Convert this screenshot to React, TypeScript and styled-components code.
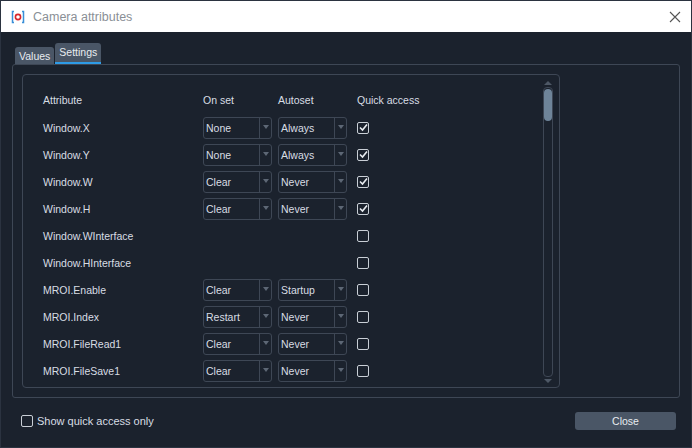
import React from 'react';
import styled, { createGlobalStyle } from 'styled-components';

const Global = createGlobalStyle`
  html, body { margin: 0; padding: 0; background: #1b222d; }
  body { font-family: "Liberation Sans", Arial, sans-serif; font-size: 10.5px; color: #d8dde4; }
  * { box-sizing: border-box; }
`;

type Row = { name: string; onSet?: string; autoset?: string; quick: boolean };

const rows: Row[] = [
  { name: 'Window.X', onSet: 'None', autoset: 'Always', quick: true },
  { name: 'Window.Y', onSet: 'None', autoset: 'Always', quick: true },
  { name: 'Window.W', onSet: 'Clear', autoset: 'Never', quick: true },
  { name: 'Window.H', onSet: 'Clear', autoset: 'Never', quick: true },
  { name: 'Window.WInterface', quick: false },
  { name: 'Window.HInterface', quick: false },
  { name: 'MROI.Enable', onSet: 'Clear', autoset: 'Startup', quick: false },
  { name: 'MROI.Index', onSet: 'Restart', autoset: 'Never', quick: false },
  { name: 'MROI.FileRead1', onSet: 'Clear', autoset: 'Never', quick: false },
  { name: 'MROI.FileSave1', onSet: 'Clear', autoset: 'Never', quick: false },
];

const Window = styled.div`
  width: 692px;
  height: 448px;
  display: flex;
  flex-direction: column;
  overflow: hidden;
  border: 1px solid #2b3340;
`;

const TitleBar = styled.div`
  height: 31px;
  background: #fff;
  display: flex;
  align-items: center;
  padding: 0 10px;
  gap: 8px;
  flex-shrink: 0;
`;

const Title = styled.span`
  flex: 1;
  color: #8a8f96;
  font-size: 12.5px;
`;

const Body = styled.div`
  flex: 1;
  padding: 11px 11px 0 11px;
  display: flex;
  flex-direction: column;
`;

const Tabs = styled.div`
  display: flex;
  align-items: flex-end;
  gap: 1px;
  padding-left: 3px;
  height: 21px;
`;

const Tab = styled.div<{ $active?: boolean }>`
  height: ${p => (p.$active ? 21 : 17)}px;
  padding: 0 4px;
  background: #4a5666;
  color: #e8ecf0;
  border-radius: 3px 3px 0 0;
  display: flex;
  align-items: ${p => (p.$active ? 'flex-start' : 'center')};
  padding-top: ${p => (p.$active ? 3 : 0)}px;
  border-bottom: ${p => (p.$active ? '2px solid #2e9be6' : 'none')};
`;

const Pane = styled.div`
  height: 334px;
  border: 1px solid #3e4755;
  border-radius: 3px;
  padding: 9px 119px 9px 9px;
`;

const Inner = styled.div`
  height: 100%;
  border: 1px solid #3e4755;
  border-radius: 4px;
  display: flex;
  padding: 6px 5px 4px 20px;
`;

const Table = styled.div`
  flex: 1;
  display: grid;
  grid-template-columns: 160px 75px 79px auto;
  grid-auto-rows: 27.1px;
  align-content: start;
  padding-top: 6px;
`;

const Cell = styled.div`
  display: flex;
  align-items: center;
`;

const Head = styled(Cell)`
  margin-top: -2px;
`;

const Combo = styled.div`
  width: 69px;
  height: 22px;
  border: 1px solid #3e4755;
  border-radius: 3px;
  display: flex;
  align-items: stretch;
`;

const ComboText = styled.span`
  flex: 1;
  padding-left: 2px;
  display: flex;
  align-items: center;
`;

const ComboArrow = styled.span`
  width: 12px;
  border-left: 1px solid #3e4755;
  display: flex;
  justify-content: center;
  padding-top: 7px;
  &::after {
    content: '';
    border: 3px solid transparent;
    border-top: 4px solid #5d6775;
    height: 0;
  }
`;

const Check = styled.span`
  width: 12px;
  height: 12px;
  border: 1px solid #c9cfd6;
  border-radius: 2px;
  display: inline-flex;
  align-items: center;
  justify-content: center;
`;

const Scroll = styled.div`
  width: 12px;
  display: flex;
  flex-direction: column;
  align-items: center;
`;

const ScrollTrack = styled.div`
  flex: 1;
  width: 10px;
  border: 1px solid #3e4755;
  border-radius: 4px;
  margin: 2px 0;
  padding: 1px 0;
`;

const Thumb = styled.div`
  width: 8px;
  height: 32px;
  margin: 0 auto;
  background: #6e8499;
  border-radius: 4px;
`;

const ArrowUp = styled.span`
  border: 4px solid transparent;
  border-bottom: 4px solid #4e5866;
  height: 0;
  margin-top: -4px;
`;

const ArrowDown = styled.span`
  border: 4px solid transparent;
  border-top: 4px solid #4e5866;
  height: 0;
  margin-bottom: -4px;
`;

const Footer = styled.div`
  display: flex;
  align-items: center;
  justify-content: space-between;
  padding: 14px 4px 0 9px;
`;

const Label = styled.label`
  display: flex;
  align-items: center;
  gap: 4px;
  font-size: 11px;
`;

const Button = styled.div`
  width: 101px;
  height: 18px;
  background: #4a5666;
  border-radius: 3px;
  display: flex;
  align-items: center;
  justify-content: center;
  color: #e8ecf0;
`;

const Tick = () => (
  <svg width="9" height="9" viewBox="0 0 9 9">
    <path d="M1 4.5 L3.5 7 L8 1.5" fill="none" stroke="#e8ecf0" strokeWidth="1.6" />
  </svg>
);

const ComboBox = ({ value }: { value: string }) => (
  <Combo>
    <ComboText>{value}</ComboText>
    <ComboArrow />
  </Combo>
);

export default function App() {
  return (
    <Window>
      <Global />
      <TitleBar>
        <svg width="14" height="14" viewBox="0 0 14 14">
          <path d="M3 1.5 H1.5 V12.5 H3 M11 1.5 H12.5 V12.5 H11" fill="none" stroke="#3a8fd8" strokeWidth="1.5" />
          <circle cx="7" cy="7" r="2.6" fill="none" stroke="#d8262c" strokeWidth="1.6" />
        </svg>
        <Title>Camera attributes</Title>
        <svg width="12" height="12" viewBox="0 0 12 12">
          <path d="M1 1 L11 11 M11 1 L1 11" stroke="#555" strokeWidth="1.1" />
        </svg>
      </TitleBar>
      <Body>
        <Tabs>
          <Tab>Values</Tab>
          <Tab $active>Settings</Tab>
        </Tabs>
        <Pane>
          <Inner>
            <Table>
              <Head>Attribute</Head>
              <Head>On set</Head>
              <Head>Autoset</Head>
              <Head>Quick access</Head>
              {rows.map(r => (
                <React.Fragment key={r.name}>
                  <Cell>{r.name}</Cell>
                  <Cell>{r.onSet && <ComboBox value={r.onSet} />}</Cell>
                  <Cell>{r.autoset && <ComboBox value={r.autoset} />}</Cell>
                  <Cell>
                    <Check>{r.quick && <Tick />}</Check>
                  </Cell>
                </React.Fragment>
              ))}
            </Table>
            <Scroll>
              <ArrowUp />
              <ScrollTrack>
                <Thumb />
              </ScrollTrack>
              <ArrowDown />
            </Scroll>
          </Inner>
        </Pane>
        <Footer>
          <Label>
            <Check />
            Show quick access only
          </Label>
          <Button>Close</Button>
        </Footer>
      </Body>
    </Window>
  );
}
